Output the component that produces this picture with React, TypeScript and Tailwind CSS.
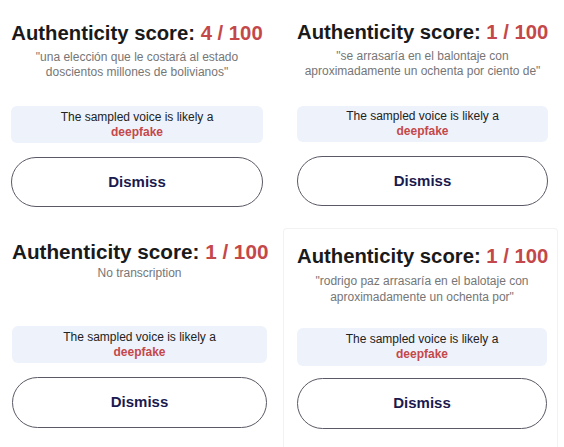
import React from "react";

type P = {
  score: string;
  quote: React.ReactNode;
  wrap: string;
  inner: string;
  titleCls: string;
  quoteCls: string;
  boxCls: string;
  btnCls: string;
};

function Panel({ score, quote, wrap, inner, titleCls, quoteCls, boxCls, btnCls }: P) {
  return (
    <div className={wrap}>
      <div className={inner}>
        <div className={titleCls}>
          Authenticity score: <span className="text-[#c4484a]">{score}</span>
        </div>
        <div className={quoteCls}>{quote}</div>
        <div className={boxCls}>
          <div className="text-[12px] leading-[15px] text-[#222]">The sampled voice is likely a</div>
          <div className="text-[12px] leading-[15px] font-bold text-[#c4484a]">deepfake</div>
        </div>
        <button className={btnCls}>Dismiss</button>
      </div>
    </div>
  );
}

export default function App() {
  return (
    <div
      className="w-[564px] h-[447px] bg-white grid grid-cols-[282px_282px] grid-rows-[220px_227px] overflow-hidden"
      style={{ fontFamily: '"Liberation Sans", Arial, sans-serif' }}
    >
      <Panel
        score="4 / 100"
        quote={<>"una elección que le costará al estado<br />doscientos millones de bolivianos"</>}
        wrap="pt-[21px] pl-[11px]"
        inner="w-[252px] flex flex-col"
        titleCls="text-center text-[20.3px] leading-[24px] font-bold text-[#1a1a1a] whitespace-nowrap"
        quoteCls="mt-[5px] text-center text-[12px] leading-[15px] text-[#767676]"
        boxCls="mt-[26px] h-[37px] rounded-[6px] bg-[#eef2fb] flex flex-col items-center justify-center"
        btnCls="mt-[14px] h-[50px] rounded-full border border-[#5a5a66] bg-white text-[15px] font-bold text-[#1b1a4f]"
      />
      <Panel
        score="1 / 100"
        quote={<>"se arrasaría en el balontaje con<br />aproximadamente un ochenta por ciento de"</>}
        wrap="pt-[20px] pl-[15px]"
        inner="w-[251px] flex flex-col"
        titleCls="text-center text-[20.3px] leading-[24px] font-bold text-[#1a1a1a] whitespace-nowrap"
        quoteCls="mt-[5px] text-center text-[12px] leading-[15px] text-[#767676]"
        boxCls="mt-[27px] h-[36px] rounded-[6px] bg-[#eef2fb] flex flex-col items-center justify-center"
        btnCls="mt-[14px] h-[50px] rounded-full border border-[#5a5a66] bg-white text-[15px] font-bold text-[#1b1a4f]"
      />
      <Panel
        score="1 / 100"
        quote={<>No transcription</>}
        wrap="pt-[20px] pl-[12px]"
        inner="w-[255px] flex flex-col"
        titleCls="text-center text-[20.7px] leading-[24px] font-bold text-[#1a1a1a] whitespace-nowrap"
        quoteCls="mt-[2px] text-center text-[12px] leading-[15px] text-[#767676]"
        boxCls="mt-[45px] h-[37px] rounded-[6px] bg-[#eef2fb] flex flex-col items-center justify-center"
        btnCls="mt-[14px] h-[51px] rounded-full border border-[#5a5a66] bg-white text-[15px] font-bold text-[#1b1a4f]"
      />
      <div className="pt-[8px] pl-[1px] pr-[6px]">
        <div className="h-full border border-b-0 border-[#f2f2f2] rounded-t-[4px] pt-[15px] pl-[13px]">
          <div className="w-[250px] flex flex-col">
            <div className="text-center text-[20.3px] leading-[24px] font-bold text-[#1a1a1a] whitespace-nowrap">
              Authenticity score: <span className="text-[#c4484a]">1 / 100</span>
            </div>
            <div className="mt-[5px] text-center text-[12px] leading-[16px] text-[#767676]">
              "rodrigo paz arrasaría en el balotaje con<br />aproximadamente un ochenta por"
            </div>
            <div className="mt-[23px] h-[38px] rounded-[6px] bg-[#eef2fb] flex flex-col items-center justify-center">
              <div className="text-[12px] leading-[15px] text-[#222]">The sampled voice is likely a</div>
              <div className="text-[12px] leading-[15px] font-bold text-[#c4484a]">deepfake</div>
            </div>
            <button className="mt-[12px] h-[51px] rounded-full border border-[#5a5a66] bg-white text-[15px] font-bold text-[#1b1a4f]">
              Dismiss
            </button>
          </div>
        </div>
      </div>
    </div>
  );
}
